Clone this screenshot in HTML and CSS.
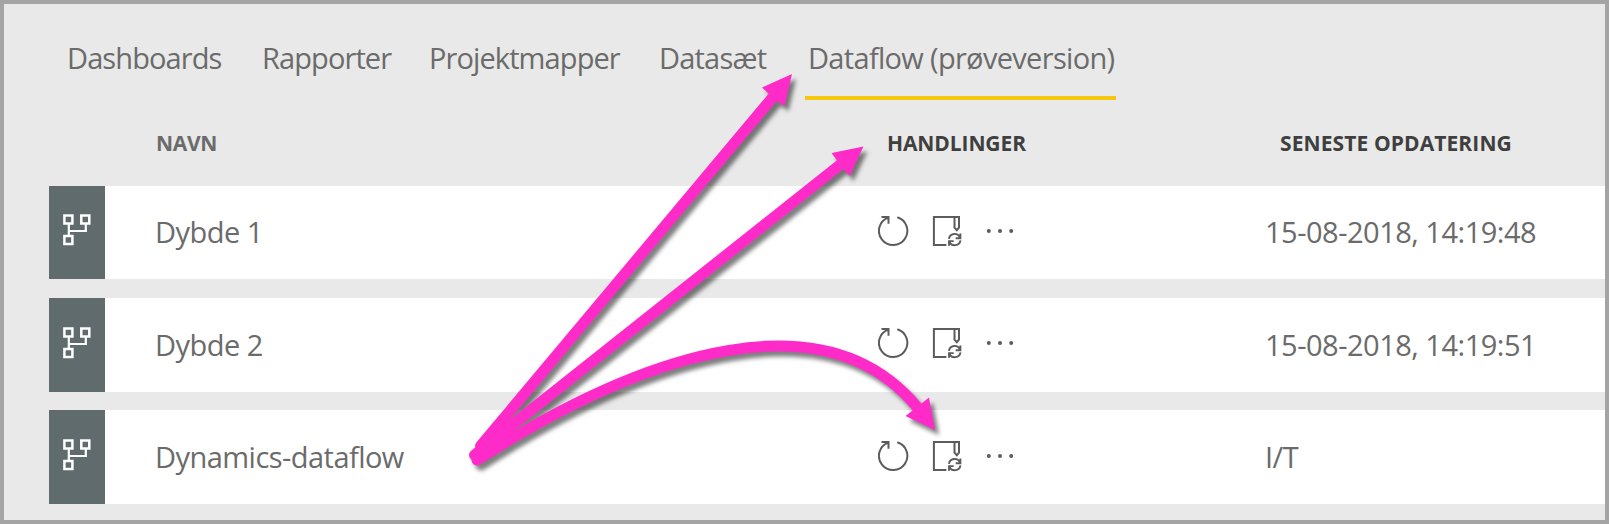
FILE: index.html
```html
<!DOCTYPE html>
<html lang="da">
<head>
<meta charset="utf-8">
<title>Dataflow</title>
<link rel="stylesheet" href="styles.css">
</head>
<body>
<svg class="defs" width="0" height="0" aria-hidden="true">
  <symbol id="flow" viewBox="0 0 28 32">
    <path d="M1.4 1.600h8v8h-8zM18.3 1.600h8v8h-8zM1.4 22h8v8h-8z" stroke-width="2.500"/>
    <path d="M5.8 9.500v12M5.8 17h17V9.500" stroke-width="2.200"/>
  </symbol>
  <symbol id="refresh" viewBox="0 0 32 32">
    <path d="M19.300 2.300A14.200 14.200 0 1 1 10.100 2.600M3.500 1.900H10.500V8.800" stroke-width="2"/>
  </symbol>
  <symbol id="schedule" viewBox="0 0 32 32">
    <path d="M14.400 29.900H1.900V1.900H27V12.600L24.800 15.200L22.500 12.600V1.900" stroke-width="2"/>
    <path d="M16.900 23.800A5.900 5.900 0 0 1 27.900 22M28.400 18.600V23.200H23.700M28.500 25.300A5.900 5.900 0 0 1 17.500 27.200M17 30.700V26.100H21.700" stroke-width="1.900"/>
  </symbol>
  <symbol id="more" viewBox="0 0 28 6">
    <path d="M2.8 3h.01M14 3h.01M25.2 3h.01" stroke-width="4" stroke-linecap="round"/>
  </symbol>
</svg>
<main class="workspace">
  <nav class="tabs">
    <a class="tab">Dashboards</a>
    <a class="tab">Rapporter</a>
    <a class="tab">Projektmapper</a>
    <a class="tab datasets">Datasæt</a>
    <a class="tab active">Dataflow (prøveversion)</a>
  </nav>
  <header class="columns">
    <span class="col-name">NAVN</span>
    <span class="col-actions">HANDLINGER</span>
    <span class="col-updated">SENESTE OPDATERING</span>
  </header>
  <section class="list">
    <article class="row">
      <div class="tile"><svg><use href="#flow"/></svg></div>
      <span class="name">Dybde 1</span>
      <div class="actions"><svg class="icon"><use href="#refresh"/></svg><svg class="icon"><use href="#schedule"/></svg><svg class="dots"><use href="#more"/></svg></div>
      <span class="date">15-08-2018, 14:19:48</span>
    </article>
    <article class="row">
      <div class="tile"><svg><use href="#flow"/></svg></div>
      <span class="name">Dybde 2</span>
      <div class="actions"><svg class="icon"><use href="#refresh"/></svg><svg class="icon"><use href="#schedule"/></svg><svg class="dots"><use href="#more"/></svg></div>
      <span class="date">15-08-2018, 14:19:51</span>
    </article>
    <article class="row">
      <div class="tile"><svg><use href="#flow"/></svg></div>
      <span class="name">Dynamics-dataflow</span>
      <div class="actions"><svg class="icon"><use href="#refresh"/></svg><svg class="icon"><use href="#schedule"/></svg><svg class="dots"><use href="#more"/></svg></div>
      <span class="date">I/T</span>
    </article>
  </section>
  <svg class="arrows" viewBox="0 0 1609 524" aria-hidden="true">
    <g class="arrow">
      <path class="shaft" d="M477 460C650 349 826 297 917 407"/><path class="head" d="M935 430L929 397.500L905.500 416z"/>
      <path class="shaft" d="M474.500 455L841 164"/><path class="head" d="M863.500 146.500L831.500 153L837.500 161L843 168.500L849.500 176z"/>
      <path class="shaft" d="M480.500 446L773 97"/><path class="head" d="M792 74L762 87.500L769 94L776 100.500L784.500 106z"/>
    </g>
  </svg>
</main>
</body>
</html>
```
FILE: styles.css
```css
* { box-sizing: border-box; }
body {
  margin: 0;
  font-family: "Open Sans", "Noto Sans", sans-serif;
  color: #6b6b6b;
}
.defs { position: absolute; }
svg { fill: none; stroke: #5c5c5c; }
.workspace {
  position: relative;
  width: 1609px;
  height: 524px;
  overflow: hidden;
  border: 4px solid #a4a4a4;
  background: #e9e9e9;
  padding-left: 45px;
}
.tabs {
  display: grid;
  grid-template-columns: 195px 167px 230px 144px 313px;
  padding: 33px 0 0 18px;
  height: 96px;
}
.tab {
  height: 63px;
  font-size: 29px;
  line-height: 41px;
  white-space: nowrap;
  letter-spacing: -0.900px;
}
.datasets { letter-spacing: -0.800px; }
.active {
  margin-left: 2px;
  padding-left: 3px;
  border-bottom: 4px solid #f5c80f;
  letter-spacing: -0.680px;
}
.columns {
  display: grid;
  grid-template-columns: 731px 393px auto;
  height: 85.700px;
  padding: 29px 0 0 107px;
  font-size: 21px;
  font-weight: 700;
  line-height: 29px;
  letter-spacing: -0.300px;
}
.col-actions, .col-updated { color: #3f3f3f; }
.col-actions { letter-spacing: -0.100px; }
.col-updated { letter-spacing: 0.100px; }
.list { display: grid; gap: 18.500px; }
.row {
  display: grid;
  grid-template-columns: 56px 50px 723px 387px auto;
  height: 93.800px;
  background: #fff;
  font-size: 29px;
  line-height: 40px;
}
.tile { background: #5f6b6d; padding: 28.800px 0 0 14px; }
.tile svg { display: block; width: 28px; height: 32px; stroke: #fff; }
.name { grid-column: 3; padding-top: 26.700px; letter-spacing: -0.540px; }
.actions { display: flex; padding-top: 29.300px; }
.icon { width: 32px; height: 32px; margin-right: 22.200px; }
.dots { width: 28px; height: 6px; margin-top: 13px; }
.date { padding-top: 26.700px; letter-spacing: -0.500px; }
.arrows { position: absolute; left: -4px; top: -4px; width: 1609px; height: 524px; }
.arrow { filter: drop-shadow(4px 5px 2px rgba(0, 0, 0, 0.5)); }
.shaft { stroke: #ff2bc8; stroke-width: 11px; stroke-linecap: round; }
.head { fill: #ff2bc8; stroke: none; }
```
